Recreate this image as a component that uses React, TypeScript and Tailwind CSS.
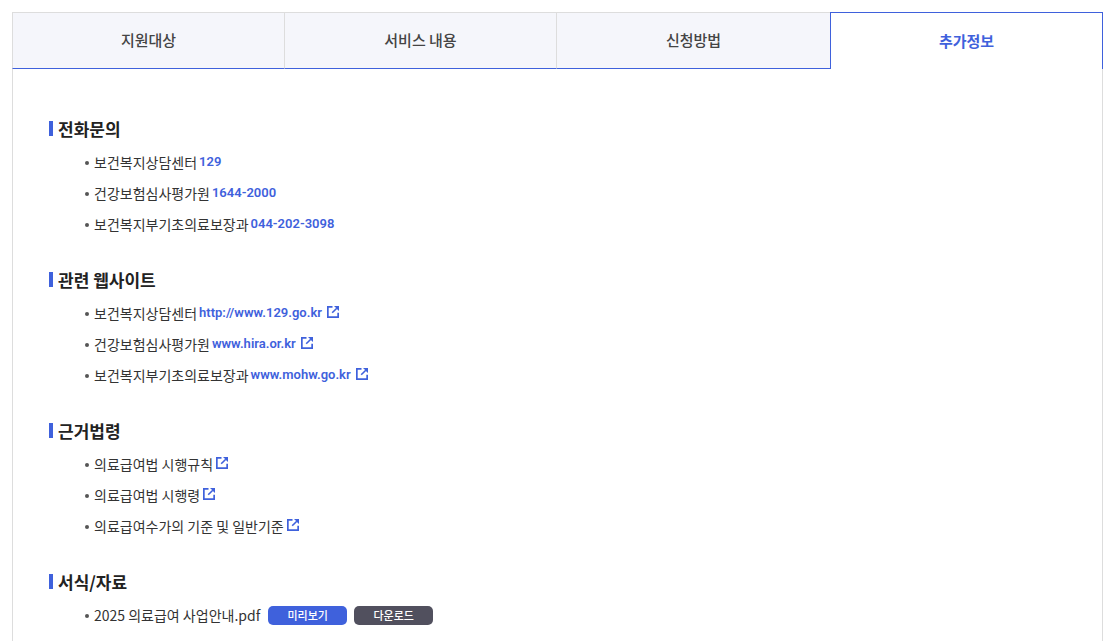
import { useState, type ReactNode } from "react";

const tabs = ["지원대상", "서비스 내용", "신청방법", "추가정보"];

const phones = [
  { name: "보건복지상담센터", number: "129" },
  { name: "건강보험심사평가원", number: "1644-2000" },
  { name: "보건복지부기초의료보장과", number: "044-202-3098" },
];

const sites = [
  { name: "보건복지상담센터", label: "http://www.129.go.kr", href: "http://www.129.go.kr" },
  { name: "건강보험심사평가원", label: "www.hira.or.kr", href: "http://www.hira.or.kr" },
  { name: "보건복지부기초의료보장과", label: "www.mohw.go.kr", href: "http://www.mohw.go.kr" },
];

const laws = ["의료급여법 시행규칙", "의료급여법 시행령", "의료급여수가의 기준 및 일반기준"];

function ExternalIcon() {
  return (
    <svg viewBox="0 0 12 12" className="mb-[2px] size-3 shrink-0" fill="none" stroke="#3f61dc" aria-hidden="true">
      <path d="M5.5 .85H.85v10.3h10.3V6.8" strokeWidth="1.7" />
      <path d="M9.8 2.2 5.2 6.8" strokeWidth="1.6" />
      <path d="M7 0h5v5L10.4 3.4 8.6 1.6Z" fill="#3f61dc" stroke="none" />
    </svg>
  );
}

function Section({ title, children }: { title: string; children: ReactNode }) {
  return (
    <section className="mb-8">
      <h2 className="mb-2 flex h-[18px] items-center gap-[5px] text-[17px] leading-[18px] font-bold text-[#222]">
        <span className="mb-[3px] h-[15px] w-1 bg-[#3f61dc]" />
        <span className="pb-[2px]">{title}</span>
      </h2>
      <ul className="pl-9">{children}</ul>
    </section>
  );
}

function Item({ children }: { children: ReactNode }) {
  return (
    <li className="flex h-[31px] items-center text-sm text-[#333]">
      <span className="mr-[5px] size-1 shrink-0 rounded-full bg-[#555]" />
      {children}
    </li>
  );
}

const nameText = "mr-[2px] pb-[2px]";
const linkText = "flex items-center gap-[5px] pb-[1px] font-['Roboto',sans-serif] text-[13px] font-semibold text-[#3f61dc]";

export default function App() {
  const [active, setActive] = useState(3);
  return (
    <main className="min-h-screen bg-white pt-3 pr-[14px] pl-3 font-['Noto_Sans_CJK_KR',sans-serif]">
      <div role="tablist" className="grid grid-cols-[272fr_272fr_274fr_273fr]">
        {tabs.map((tab, i) => (
          <button
            key={tab}
            type="button"
            role="tab"
            aria-selected={active === i}
            onClick={() => setActive(i)}
            className={
              active === i
                ? "h-[57px] border border-b-0 border-[#3f61dc] bg-white text-[15px] font-bold text-[#3f61dc]"
                : "h-[57px] border-t border-b border-l border-t-[#ddd] border-b-[#3f61dc] border-l-[#ddd] bg-[#f5f6fb] text-[15px] font-medium text-[#444]"
            }
          >
            {tab}
          </button>
        ))}
      </div>
      <div role="tabpanel" className="min-h-[572px] border-x border-[#ddd] px-9 pt-[52px]">
        <Section title="전화문의">
          {phones.map((p) => (
            <Item key={p.name}>
              <span className={nameText}>{p.name}</span>
              <a href={`tel:${p.number}`} className={linkText}>{p.number}</a>
            </Item>
          ))}
        </Section>
        <Section title="관련 웹사이트">
          {sites.map((s) => (
            <Item key={s.name}>
              <span className={nameText}>{s.name}</span>
              <a href={s.href} className={linkText}>
                {s.label}
                <ExternalIcon />
              </a>
            </Item>
          ))}
        </Section>
        <Section title="근거법령">
          {laws.map((law) => (
            <Item key={law}>
              <a href="#law" className="flex items-center gap-[3px] pb-[2px]">
                {law}
                <ExternalIcon />
              </a>
            </Item>
          ))}
        </Section>
        <Section title="서식/자료">
          <Item>
            <span className="mr-2 pb-[2px]">2025 의료급여 사업안내.pdf</span>
            <button type="button" className="mr-[7px] h-[19px] w-[79px] rounded-[5px] bg-[#3f61dc] text-[11px] leading-[19px] font-medium text-white">
              미리보기
            </button>
            <button type="button" className="h-[19px] w-[79px] rounded-[5px] bg-[#51505e] text-[11px] leading-[19px] font-medium text-white">
              다운로드
            </button>
          </Item>
        </Section>
      </div>
    </main>
  );
}
